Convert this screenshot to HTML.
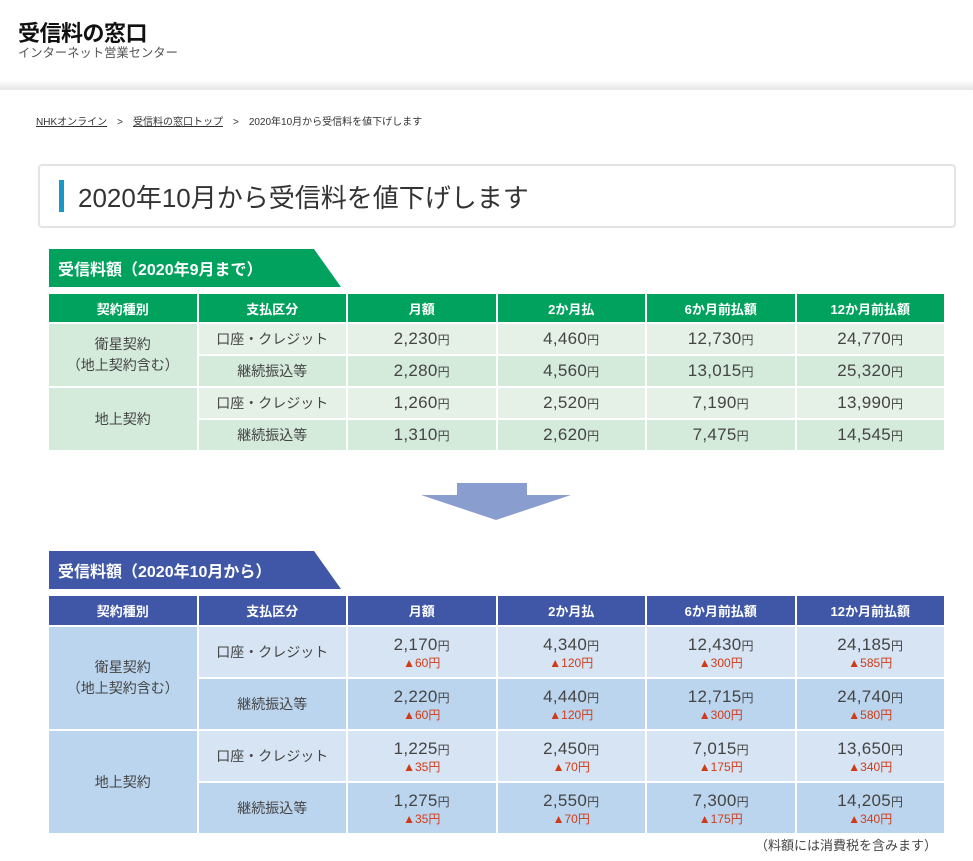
<!DOCTYPE html>
<html><head><meta charset="utf-8"><style>
*{margin:0;padding:0;box-sizing:border-box}
body{width:973px;height:861px;background:#fff;font-family:"Liberation Sans","Noto Sans CJK JP",sans-serif;color:#333;position:relative;overflow:hidden}
.hd{position:absolute;left:0;top:0;width:973px;height:88px;background:#fff}
.sh{position:absolute;left:0;top:80px;width:973px;height:10px;background:linear-gradient(#fff,#e6e6e6)}
.logo{position:absolute;left:18px;top:16px;font-size:22px;font-weight:bold;color:#111;letter-spacing:-0.5px}
.sub{position:absolute;left:18px;top:43px;font-size:12.3px;color:#555}
.bc{position:absolute;left:36px;top:113px;font-size:10px;color:#333}
.bc u{color:#333}
.bc span{margin:0 10px}
.tb{position:absolute;left:38px;top:164px;width:918px;height:64px;border:2px solid #e4e4e4;border-radius:4px;background:#fff}
.tb i{position:absolute;left:19px;top:14px;width:5px;height:32px;background:#1a98c4}
.tb b{position:absolute;left:38px;top:12px;font-size:26px;font-weight:normal;color:#333}
.lab{position:absolute;left:49px;height:38px;width:292px;color:#fff;font-size:16px;font-weight:bold;padding:7px 0 0 9px;clip-path:polygon(0 0,265px 0,292px 100%,0 100%)}
table{position:absolute;left:47px;border-spacing:2px;table-layout:fixed;width:899px}
td,th{text-align:center;vertical-align:middle;padding:0}
th{color:#fff;font-size:13px;font-weight:bold}
.p{font-size:17px;color:#444;letter-spacing:0.3px}
.p small{font-size:12px}
.d{font-size:12px;color:#d03b17;line-height:14px}
.t{font-size:14px;color:#444}
.k{font-size:14px;color:#444;line-height:21px}
.g th{background:#00a25e;height:28px}
.g td{height:30px}
.g .a td{background:#e5f1e7}
.g .b td{background:#d4eadb}
.g td.k{background:#d4eadb}
.bl th{background:#3f57a6;height:29px}
.bl td{height:50px}
.bl .a td{background:#d6e4f3}
.bl .b td{background:#bcd5ee}
.bl td.k{background:#bcd5ee}
.bl .p{line-height:19px}
</style></head><body>
<div class="hd"></div><div class="sh"></div>
<div class="logo">受信料の窓口</div>
<div class="sub">インターネット営業センター</div>
<div class="bc"><u>NHKオンライン</u><span>&gt;</span><u>受信料の窓口トップ</u><span>&gt;</span>2020年10月から受信料を値下げします</div>
<div class="tb"><i></i><b>2020年10月から受信料を値下げします</b></div>

<div class="lab" style="top:249px;background:#00a25e">受信料額（2020年9月まで）</div>
<table class="g" style="top:292px">
<colgroup><col><col><col><col><col><col></colgroup>
<tr><th>契約種別</th><th>支払区分</th><th>月額</th><th>2か月払</th><th>6か月前払額</th><th>12か月前払額</th></tr>
<tr class="a"><td class="k" rowspan="2">衛星契約<br>（地上契約含む）</td><td class="t">口座・クレジット</td><td class="p">2,230<small>円</small></td><td class="p">4,460<small>円</small></td><td class="p">12,730<small>円</small></td><td class="p">24,770<small>円</small></td></tr>
<tr class="b"><td class="t">継続振込等</td><td class="p">2,280<small>円</small></td><td class="p">4,560<small>円</small></td><td class="p">13,015<small>円</small></td><td class="p">25,320<small>円</small></td></tr>
<tr class="a"><td class="k" rowspan="2">地上契約</td><td class="t">口座・クレジット</td><td class="p">1,260<small>円</small></td><td class="p">2,520<small>円</small></td><td class="p">7,190<small>円</small></td><td class="p">13,990<small>円</small></td></tr>
<tr class="b"><td class="t">継続振込等</td><td class="p">1,310<small>円</small></td><td class="p">2,620<small>円</small></td><td class="p">7,475<small>円</small></td><td class="p">14,545<small>円</small></td></tr>
</table>

<svg style="position:absolute;left:420px;top:483px" width="152" height="38"><polygon points="37,0 107,0 107,12 151,12 76,37 1,12 37,12" fill="#8a9dcf"/></svg>

<div class="lab" style="top:551px;background:#3f57a6">受信料額（2020年10月から）</div>
<table class="bl" style="top:594px">
<tr><th>契約種別</th><th>支払区分</th><th>月額</th><th>2か月払</th><th>6か月前払額</th><th>12か月前払額</th></tr>
<tr class="a"><td class="k" rowspan="2">衛星契約<br>（地上契約含む）</td><td class="t">口座・クレジット</td><td><div class="p">2,170<small>円</small></div><div class="d">▲60円</div></td><td><div class="p">4,340<small>円</small></div><div class="d">▲120円</div></td><td><div class="p">12,430<small>円</small></div><div class="d">▲300円</div></td><td><div class="p">24,185<small>円</small></div><div class="d">▲585円</div></td></tr>
<tr class="b"><td class="t">継続振込等</td><td><div class="p">2,220<small>円</small></div><div class="d">▲60円</div></td><td><div class="p">4,440<small>円</small></div><div class="d">▲120円</div></td><td><div class="p">12,715<small>円</small></div><div class="d">▲300円</div></td><td><div class="p">24,740<small>円</small></div><div class="d">▲580円</div></td></tr>
<tr class="a"><td class="k" rowspan="2">地上契約</td><td class="t">口座・クレジット</td><td><div class="p">1,225<small>円</small></div><div class="d">▲35円</div></td><td><div class="p">2,450<small>円</small></div><div class="d">▲70円</div></td><td><div class="p">7,015<small>円</small></div><div class="d">▲175円</div></td><td><div class="p">13,650<small>円</small></div><div class="d">▲340円</div></td></tr>
<tr class="b"><td class="t">継続振込等</td><td><div class="p">1,275<small>円</small></div><div class="d">▲35円</div></td><td><div class="p">2,550<small>円</small></div><div class="d">▲70円</div></td><td><div class="p">7,300<small>円</small></div><div class="d">▲175円</div></td><td><div class="p">14,205<small>円</small></div><div class="d">▲340円</div></td></tr>
</table>
<div style="position:absolute;left:755px;top:835px;font-size:13px;color:#444">（料額には消費税を含みます）</div>
</body></html>
